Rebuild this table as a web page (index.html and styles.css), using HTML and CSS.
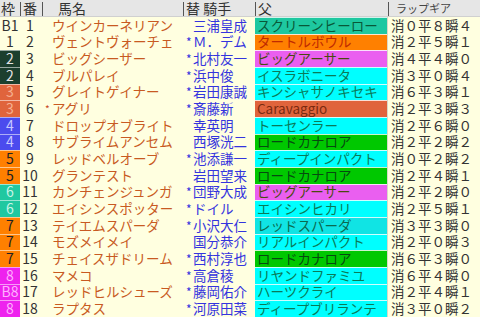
FILE: index.html
```html
<!DOCTYPE html>
<html lang="ja">
<head>
<meta charset="utf-8">
<link rel="stylesheet" href="styles.css">
</head>
<body>
<div class="table">
  <div class="row head">
    <div class="h h-waku">枠</div>
    <div class="h h-ban sep">番</div>
    <div class="h h-name sep">馬名</div>
    <div class="h h-jockey sep">替 騎手</div>
    <div class="h h-sire sep">父</div>
    <div class="h h-lap sep">ラップギア</div>
  </div>

  <div class="row"><div class="waku w1">B1</div><div class="ban">1</div><div class="name"><span class="mk"></span>ウインカーネリアン</div><div class="jockey"><span class="jm"></span>三浦皇成</div><div class="sire s-teal">スクリーンヒーロー</div><div class="lap">消０平８瞬４</div></div>
  <div class="row"><div class="waku w1">1</div><div class="ban">2</div><div class="name"><span class="mk"></span>ヴェントヴォーチェ</div><div class="jockey"><span class="jm">*</span>Ｍ．デム</div><div class="sire s-orange">タートルボウル</div><div class="lap">消２平５瞬１</div></div>
  <div class="row"><div class="waku w2">2</div><div class="ban">3</div><div class="name"><span class="mk"></span>ビッグシーザー</div><div class="jockey"><span class="jm">*</span>北村友一</div><div class="sire s-pink">ビッグアーサー</div><div class="lap">消４平４瞬０</div></div>
  <div class="row"><div class="waku w2">2</div><div class="ban">4</div><div class="name"><span class="mk"></span>ブルパレイ</div><div class="jockey"><span class="jm">*</span>浜中俊</div><div class="sire s-cyan">イスラボニータ</div><div class="lap">消３平０瞬４</div></div>
  <div class="row"><div class="waku w3">3</div><div class="ban">5</div><div class="name"><span class="mk"></span>グレイトゲイナー</div><div class="jockey"><span class="jm">*</span>岩田康誠</div><div class="sire s-cyan">キンシャサノキセキ</div><div class="lap">消６平３瞬１</div></div>
  <div class="row"><div class="waku w3">3</div><div class="ban">6</div><div class="name"><span class="mk">*</span>アグリ</div><div class="jockey"><span class="jm">*</span>斎藤新</div><div class="sire s-red">Caravaggio</div><div class="lap">消２平３瞬３</div></div>
  <div class="row"><div class="waku w4">4</div><div class="ban">7</div><div class="name"><span class="mk"></span>ドロップオブライト</div><div class="jockey"><span class="jm"></span>幸英明</div><div class="sire s-cyan">トーセンラー</div><div class="lap">消２平６瞬０</div></div>
  <div class="row"><div class="waku w4">4</div><div class="ban">8</div><div class="name"><span class="mk"></span>サブライムアンセム</div><div class="jockey"><span class="jm"></span>西塚洸二</div><div class="sire s-green">ロードカナロア</div><div class="lap">消２平２瞬２</div></div>
  <div class="row"><div class="waku w5">5</div><div class="ban">9</div><div class="name"><span class="mk"></span>レッドベルオーブ</div><div class="jockey"><span class="jm">*</span>池添謙一</div><div class="sire s-cyan">ディープインパクト</div><div class="lap">消０平２瞬２</div></div>
  <div class="row"><div class="waku w5">5</div><div class="ban">10</div><div class="name"><span class="mk"></span>グランテスト</div><div class="jockey"><span class="jm"></span>岩田望来</div><div class="sire s-green">ロードカナロア</div><div class="lap">消２平４瞬１</div></div>
  <div class="row"><div class="waku w6">6</div><div class="ban">11</div><div class="name"><span class="mk"></span>カンチェンジュンガ</div><div class="jockey"><span class="jm">*</span>団野大成</div><div class="sire s-pink">ビッグアーサー</div><div class="lap">消２平２瞬０</div></div>
  <div class="row"><div class="waku w6">6</div><div class="ban">12</div><div class="name"><span class="mk"></span>エイシンスポッター</div><div class="jockey"><span class="jm">*</span>ドイル</div><div class="sire s-cyan">エイシンヒカリ</div><div class="lap">消２平５瞬１</div></div>
  <div class="row"><div class="waku w7">7</div><div class="ban">13</div><div class="name"><span class="mk"></span>テイエムスパーダ</div><div class="jockey"><span class="jm">*</span>小沢大仁</div><div class="sire s-cyan2">レッドスパーダ</div><div class="lap">消３平３瞬０</div></div>
  <div class="row"><div class="waku w7">7</div><div class="ban">14</div><div class="name"><span class="mk"></span>モズメイメイ</div><div class="jockey"><span class="jm"></span>国分恭介</div><div class="sire s-cyan">リアルインパクト</div><div class="lap">消２平０瞬３</div></div>
  <div class="row"><div class="waku w7">7</div><div class="ban">15</div><div class="name"><span class="mk"></span>チェイスザドリーム</div><div class="jockey"><span class="jm">*</span>西村淳也</div><div class="sire s-green">ロードカナロア</div><div class="lap">消６平３瞬０</div></div>
  <div class="row"><div class="waku w8">8</div><div class="ban">16</div><div class="name"><span class="mk"></span>マメコ</div><div class="jockey"><span class="jm">*</span>高倉稜</div><div class="sire s-cyan">リヤンドファミユ</div><div class="lap">消６平４瞬０</div></div>
  <div class="row"><div class="waku w8">B8</div><div class="ban">17</div><div class="name"><span class="mk"></span>レッドヒルシューズ</div><div class="jockey"><span class="jm">*</span>藤岡佑介</div><div class="sire s-cyan">ハーツクライ</div><div class="lap">消２平４瞬１</div></div>
  <div class="row"><div class="waku w8">8</div><div class="ban">18</div><div class="name"><span class="mk"></span>ラプタス</div><div class="jockey"><span class="jm">*</span>河原田菜</div><div class="sire s-cyan">ディープブリランテ</div><div class="lap">消３平０瞬２</div></div>
</div>
</body>
</html>
```

FILE: styles.css
```css
html, body {
  margin: 0;
  padding: 0;
  background: #ffffe0;
}

.table {
  width: 480px;
  height: 317px;
  display: grid;
  grid-template-rows: 17px repeat(18, 1fr);
  font-family: "Noto Sans CJK JP", "DejaVu Sans", sans-serif;
  font-size: 13.5px;
  background: #ffffe0;
  overflow: hidden;
}

.row {
  display: grid;
  grid-template-columns: 20px 22px 141px 72px 133px 92px;
  min-height: 0;
}

.row > div {
  display: flex;
  align-items: center;
  white-space: nowrap;
  line-height: 15px;
  min-width: 0;
}

/* header */
.head {
  background: #e6e6e6;
  border-bottom: 1px solid #d0d0d0;
  box-sizing: border-box;
}
.h {
  color: #333;
  font-size: 14px;
  position: relative;
}
.h.sep::before {
  content: "";
  position: absolute;
  left: 0;
  top: 2px;
  bottom: 0;
  width: 1px;
  background: #555;
}
.h-waku { padding-left: 1px; }
.h-ban { padding-left: 3px; }
.h-name { padding-left: 16px; }
.h-jockey { padding-left: 3px; }
.h-sire { padding-left: 3px; }
.h-lap { padding-left: 8px; font-size: 11px; color: #444; }

/* frame */
.waku {
  justify-content: center;
  font-size: 14px;
  box-shadow: inset 0 1px 0 rgba(255, 255, 255, 0.55);
}
.w1 { background: #ffffe0; color: #333; box-shadow: none; }
.w2 { background: #1c3f2e; color: #e4e4e4; }
.w3 { background: #e0643c; color: #f6b090; }
.w4 { background: #4b4bee; color: #c8c8ff; }
.w5 { background: #ff8000; color: #222; }
.w6 { background: #20c8a0; color: #c8f4e6; }
.w7 { background: #ff8000; color: #222; }
.w8 { background: #ee22ee; color: #ffb0ff; }

/* number */
.ban {
  justify-content: center;
  color: #333;
  font-size: 14px;
  padding-right: 2px;
}

/* horse name */
.name {
  color: #c85a22;
}
.mk {
  display: inline-block;
  width: 10px;
  padding-left: 3px;
  box-sizing: border-box;
  font-size: 10px;
  color: #c8481c;
}

/* jockey */
.jockey {
  color: #3434de;
}
.jm {
  display: inline-block;
  width: 10px;
  padding-left: 3px;
  box-sizing: border-box;
  font-size: 12px;
}

/* sire */
.sire {
  padding-left: 2px;
  color: #0a6a48;
  box-shadow: inset 0 1px 0 rgba(255, 255, 255, 0.8);
  border-right: 1px solid #d8d8c8;
  overflow: hidden;
}
.s-teal { background: #1ec8a0; color: #085838; }
.s-orange { background: #ff8000; color: #c02a00; }
.s-pink { background: #ea5ff0; color: #4a4a10; }
.s-cyan { background: #00ffff; color: #0a7a58; }
.s-cyan2 { background: #10e4e4; color: #0a6a50; }
.s-red { background: #e0643c; color: #7a2a10; }
.s-green { background: #00c800; color: #064a10; }

/* lap */
.lap {
  padding-left: 3px;
  color: #333;
}
```
